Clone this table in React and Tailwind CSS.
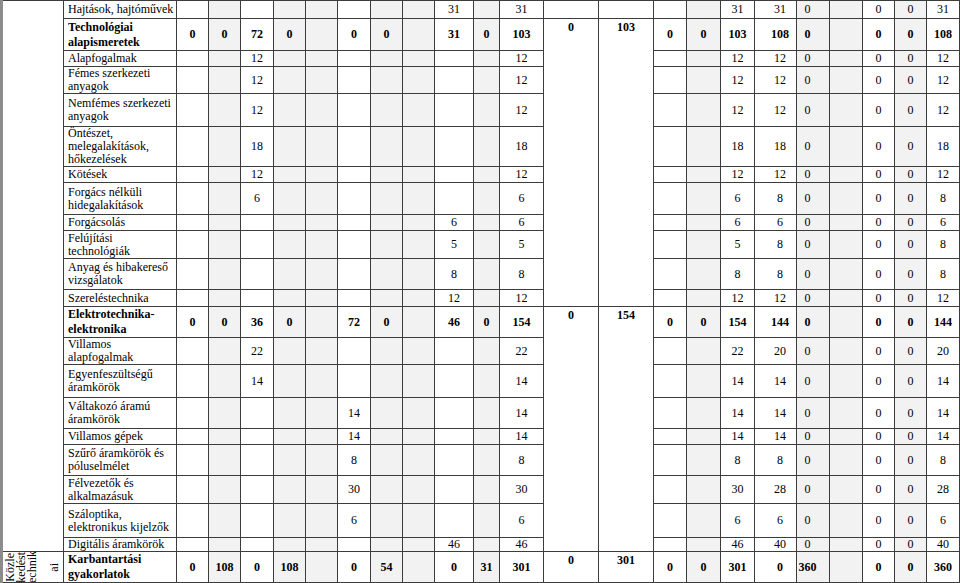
import React from "react";

const GRAY = new Set([3, 5, 6, 8, 9, 11, 16, 19, 20, 22]);
const tail = (a, b) => ({ 17: a, 18: b, 19: 0, 21: 0, 22: 0, 23: b });

const rows = [
  { l: ["Hajtások, hajtóművek"], h: "h-[18px]", v: { 10: 31, 12: 31, ...tail(31, 31) } },
  { l: ["Technológiai", "alapismeretek"], h: "h-[32px]", b: true, g: [0, 103, 11], v: { 2: 0, 3: 0, 4: 72, 5: 0, 7: 0, 8: 0, 10: 31, 11: 0, 12: 103, 15: 0, 16: 0, ...tail(103, 108) } },
  { l: ["Alapfogalmak"], h: "h-[16px]", v: { 4: 12, 12: 12, ...tail(12, 12) } },
  { l: ["Fémes szerkezeti", "anyagok"], h: "h-[27px]", v: { 4: 12, 12: 12, ...tail(12, 12) } },
  { l: ["Nemfémes szerkezeti", "anyagok"], h: "h-[33px]", v: { 4: 12, 12: 12, ...tail(12, 12) } },
  { l: ["Öntészet,", "melegalakítások,", "hőkezelések"], h: "h-[40px]", v: { 4: 18, 12: 18, ...tail(18, 18) } },
  { l: ["Kötések"], h: "h-[16px]", v: { 4: 12, 12: 12, ...tail(12, 12) } },
  { l: ["Forgács nélküli", "hidegalakítások"], h: "h-[32px]", v: { 4: 6, 12: 6, ...tail(6, 8) } },
  { l: ["Forgácsolás"], h: "h-[16px]", v: { 10: 6, 12: 6, ...tail(6, 6) } },
  { l: ["Felújítási", "technológiák"], h: "h-[28px]", v: { 10: 5, 12: 5, ...tail(5, 8) } },
  { l: ["Anyag és hibakereső", "vizsgálatok"], h: "h-[31px]", v: { 10: 8, 12: 8, ...tail(8, 8) } },
  { l: ["Szereléstechnika"], h: "h-[17px]", v: { 10: 12, 12: 12, ...tail(12, 12) } },
  { l: ["Elektrotechnika-", "elektronika"], h: "h-[31px]", b: true, g: [0, 154, 9], v: { 2: 0, 3: 0, 4: 36, 5: 0, 7: 72, 8: 0, 10: 46, 11: 0, 12: 154, 15: 0, 16: 0, ...tail(154, 144) } },
  { l: ["Villamos", "alapfogalmak"], h: "h-[27px]", v: { 4: 22, 12: 22, ...tail(22, 20) } },
  { l: ["Egyenfeszültségű", "áramkörök"], h: "h-[33px]", v: { 4: 14, 12: 14, ...tail(14, 14) } },
  { l: ["Váltakozó áramú", "áramkörök"], h: "h-[31px]", v: { 7: 14, 12: 14, ...tail(14, 14) } },
  { l: ["Villamos gépek"], h: "h-[16px]", v: { 7: 14, 12: 14, ...tail(14, 14) } },
  { l: ["Szűrő áramkörök és", "póluselmélet"], h: "h-[31px]", v: { 7: 8, 12: 8, ...tail(8, 8) } },
  { l: ["Félvezetők és", "alkalmazásuk"], h: "h-[28px]", v: { 7: 30, 12: 30, ...tail(30, 28) } },
  { l: ["Száloptika,", "elektronikus kijelzők"], h: "h-[34px]", v: { 7: 6, 12: 6, ...tail(6, 6) } },
  { l: ["Digitális áramkörök"], h: "h-[14px]", v: { 10: 46, 12: 46, ...tail(46, 40) } },
  { l: ["Karbantartási", "gyakorlatok"], h: "h-[31px]", b: true, g: [0, 301, 1], first: true, v: { 2: 0, 3: 108, 4: 0, 5: 108, 7: 0, 8: 54, 10: 0, 11: 31, 12: 301, 15: 0, 16: 0, 17: 301, 18: 0, 19: 360, 21: 0, 22: 0, 23: 360 } },
];

const B = "border border-[#3c3c3c] text-[#000000] font-['Liberation_Serif','Times_New_Roman',serif]";

function ValueCell({ c, val, bold }) {
  const bg = GRAY.has(c) ? "bg-[#f2f2f2]" : "bg-white";
  const align = c === 19 ? "text-center pr-[11px] pl-0" : c === 18 ? "text-center pl-[9px] pr-0" : "text-center px-0";
  return (
    <td className={`${B} ${bg} ${align} py-0 align-middle ${bold ? "font-bold" : "font-normal"}`}>
      {val === undefined ? "" : val}
    </td>
  );
}

export default function App() {
  let covered = 0;
  return (
    <div className="w-[960px] h-[583px] overflow-hidden bg-white text-black font-['Liberation_Serif','Times_New_Roman',serif]">
      <table className="table-fixed border-collapse w-[958px] text-[12px] leading-[13px] font-['Liberation_Serif','Times_New_Roman',serif]">
        <colgroup>
          <col className="w-[62px]" />
          <col className="w-[113px]" />
          <col className="w-[32px]" />
          <col className="w-[32px]" />
          <col className="w-[33px]" />
          <col className="w-[32px]" />
          <col className="w-[32px]" />
          <col className="w-[33px]" />
          <col className="w-[32px]" />
          <col className="w-[32px]" />
          <col className="w-[39px]" />
          <col className="w-[26px]" />
          <col className="w-[44px]" />
          <col className="w-[55px]" />
          <col className="w-[55px]" />
          <col className="w-[33px]" />
          <col className="w-[34px]" />
          <col className="w-[34px]" />
          <col className="w-[42px]" />
          <col className="w-[33px]" />
          <col className="w-[33px]" />
          <col className="w-[32px]" />
          <col className="w-[32px]" />
          <col className="w-[33px]" />
        </colgroup>
        <tbody>
          {rows.map((r, i) => {
            const cells = [];
            if (i === 0) {
              cells.push(
                <td key="c0" rowSpan={21} className={`${B} border-l-[3px] border-l-[#8c8c8c] bg-white`} />
              );
            }
            if (r.first) {
              cells.push(
                <td key="c0" className={`${B} border-l-[3px] border-l-[#8c8c8c] bg-white p-0 align-middle`}>
                  <div className="flex h-[30px] items-center overflow-hidden pl-[2px] text-[12px] leading-[11px]">
                    <span className="w-[11px] [writing-mode:vertical-rl] rotate-180 whitespace-nowrap">Közle</span>
                    <span className="w-[11px] [writing-mode:vertical-rl] rotate-180 whitespace-nowrap">kedést</span>
                    <span className="w-[11px] [writing-mode:vertical-rl] rotate-180 whitespace-nowrap">echnik</span>
                    <span className="ml-[11px] w-[11px] [writing-mode:vertical-rl] rotate-180 whitespace-nowrap">ai</span>
                  </div>
                </td>
              );
            }
            cells.push(
              <td key="c1" className={`${B} bg-white pl-[4px] pr-0 py-0 align-middle ${r.b ? "font-bold leading-[15px]" : "font-normal"}`}>
                {r.l.map((t, k) => (
                  <div key={k} className="whitespace-nowrap overflow-hidden">{t}</div>
                ))}
              </td>
            );
            for (let c = 2; c <= 23; c++) {
              if (c === 13 || c === 14) {
                if (r.g) {
                  if (c === 13) covered = r.g[2];
                  cells.push(
                    <td key={c} rowSpan={r.g[2]} className={`${B} bg-white text-center align-top pt-[2px] px-0 font-bold`}>
                      {c === 13 ? r.g[0] : r.g[1]}
                    </td>
                  );
                  continue;
                }
                if (covered > 0) continue;
                cells.push(<td key={c} className={`${B} bg-white`} />);
                continue;
              }
              cells.push(<ValueCell key={c} c={c} val={r.v[c]} bold={r.b} />);
            }
            if (covered > 0) covered -= 1;
            return (
              <tr key={i} className={r.h}>
                {cells}
              </tr>
            );
          })}
        </tbody>
      </table>
    </div>
  );
}
